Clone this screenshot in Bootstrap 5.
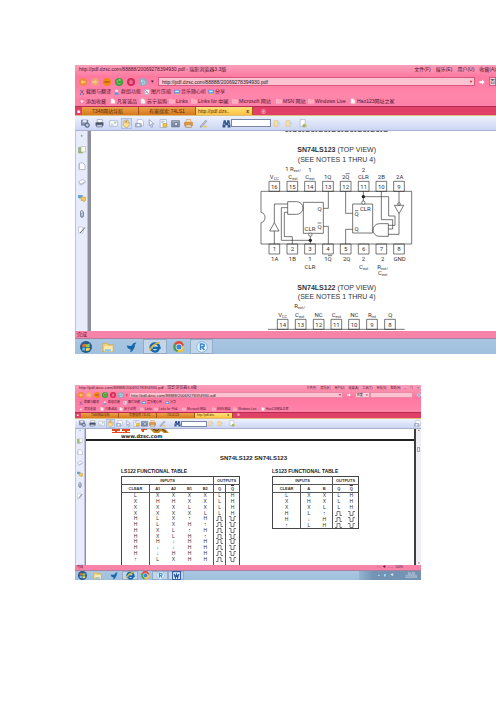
<!DOCTYPE html>
<html lang="zh-CN">
<head>
<meta charset="utf-8">
<meta name="viewport" content="width=device-width, initial-scale=1">
<title>SN74LS123 / SN74LS122</title>
<link href="https://cdn.jsdelivr.net/npm/bootstrap@5.3.0/dist/css/bootstrap.min.css" rel="stylesheet">
<style>
body{background:#fff;color:#222;font-family:"Liberation Sans","Noto Sans CJK SC",sans-serif;overflow-x:hidden}
.page-body{padding:65px 0 100px 75px}
a,button,input{color:inherit;font:inherit;text-decoration:none}
button{border:0;background:none;padding:0;line-height:1}
svg{display:block}
.shot{--t:5px;--ic:6px;--nav:8px;--tool:9px;--task:12px;font-size:var(--t);line-height:1;white-space:nowrap;overflow:hidden}
.shot-sm{--t:3px;--ic:4px;--nav:6px;--tool:7px;--task:9px;margin:31px 75px 0 0}
.ic{width:var(--ic);height:var(--ic);flex:none}
.nav-ic .ic{width:var(--nav);height:var(--nav)}
.tools .ic{width:var(--tool);height:var(--tool)}
.taskbar .ic{width:var(--task);height:var(--task)}
.side .ic{width:var(--nav);height:var(--nav)}
.chrome{background:linear-gradient(#f9a0ba,#ff78a0 12px,#ff86ac 30px,#fb7ba3);color:#54142e}
.title-row{height:11px;padding-left:4px;padding-bottom:2px}
.title-text{font-size:5px}
.menu{gap:5px;margin-left:auto;padding-right:0}
.addr-row{height:11px;padding-left:4px}
.nav-ic{width:79px;gap:4px}
.addr{background:#fbc3d2;border:1px solid #d9587f;border-radius:0;height:9px;padding:0 3px;color:#222;min-width:0;outline:0;font-size:5px}
.addr-wrap{position:relative}
.addr-arrow{position:absolute;right:2px;top:3px;color:#b81d3a;font-size:4px}
.engine{background:#fbd0db;border:1px solid #d9587f;color:#222;height:9px}
.search-box{width:43px}
.link-row,.mark-row{display:grid;align-items:center;padding-left:4px}
.link-row{height:9px;grid-template-columns:35px 30px 30px 34px 30px}
.mark-row{height:10px;grid-template-columns:31px 30px 29px 22px 41px 44px 32px 42px 60px}
.item{display:flex;align-items:center;gap:1px}
.tabs{height:10px;background:#e04068;border-top:1px solid #b62c50;border-bottom:1px solid #e0bd7e;align-items:stretch;color:#582b0d}
.tab-home{width:7px;color:#fff}
.tab-item{width:57px;background:linear-gradient(#eda04a,#d67a1c);border-right:1px solid #a9541c;text-align:left;padding-left:10px;display:flex;align-items:center}
.tab-live{background:linear-gradient(#ffe27c,#fbc142);padding-left:2px;padding-right:3px;justify-content:space-between}
.tools{height:15px;display:grid;align-items:center;justify-items:center;padding-left:2px;background:linear-gradient(#edf2ff,#ccd5f4);border-bottom:1px solid #a9b1cf;grid-template-columns:16px 13px 14px 13px 12px 12px 12px 12px 14px 16px 20px 40px 12px 12px 16px 1fr}
.find-ic{justify-self:end}
.find{width:100%;height:8px;border:1px solid #7b85a5;background:#fff;padding:0;border-radius:0}
.pressed{background:#cfdcfa;outline:1px solid #b1bde2}
.view{min-height:200px;background:#fff;display:flex;align-items:stretch}
.side{width:12px;background:#e7ebfc;border-left:1px solid #bcc3df;gap:8px;padding-top:2px}
.gutter{width:4px;background:#8e909c;border-left:1px solid #bcc0dd}
.circuit{width:170px;margin-left:159px;height:200px}
.circuit text{font-family:Roboto,"Liberation Sans",sans-serif;font-size:18px;fill:#333;text-anchor:middle}
.circuit .hd{font-family:"Liberation Sans",sans-serif;font-size:21px}
.circuit .sb{font-size:12px}
.wire{fill:none;stroke:#333;stroke-width:2}
.status{height:8px;background:#f783a9;color:#5b1531;padding:0 2px;border-bottom:1px solid #ad7d9d}
.taskbar{height:15px;display:grid;align-items:stretch;grid-template-columns:21px 24px 23px 24px 23px 23px 1fr;background:linear-gradient(#a9c6e2,#9fc0de)}
.taskbar button{display:flex;align-items:center;justify-content:center}
.running{background:#c3d5e9;box-shadow:inset 0 0 0 1px #92abc6}

.shot-sm .title-row{height:6px;padding-bottom:0}
.shot-sm .title-text,.shot-sm .addr{font-size:4px}
.shot-sm .menu{gap:4px;padding-right:2px}
.shot-sm .addr-row{height:8px;padding-left:3px}
.shot-sm .nav-ic{width:51px;gap:2px}
.shot-sm .addr,.shot-sm .engine{height:6px;border-color:#e98aa9;padding:0 1px}
.shot-sm .addr-arrow{top:1px}
.shot-sm .link-row{height:7px;grid-template-columns:24px 20px 19px 23px 20px}
.shot-sm .mark-row{height:6px;grid-template-columns:21px 19px 21px 14px 28px 30px 21px 28px 40px}
.shot-sm .tabs{height:7px}
.shot-sm .tab-home{width:6px}
.shot-sm .tab-item{width:38px}
.shot-sm .tools{height:10px;grid-template-columns:10px 10px 9px 9px 9px 8px 8px 8px 9px 11px 13px 26px 9px 9px 14px 1fr}
.shot-sm .find{height:6px}
.shot-sm .view{min-height:136px;height:136px}
.shot-sm .side{width:9px;gap:5px;padding-top:1px}
.shot-sm .gutter{width:2px}
.shot-sm .status{height:6px}
.shot-sm .taskbar{height:9px;grid-template-columns:14px 17px 16px 16px 14px 16px 16px 1fr}
.tray{background:linear-gradient(90deg,#93b3d2,#7393b4 15px);width:62px;color:#e6eef7;justify-self:end}
.sheet{border-right:2px solid #3c3e40;overflow:hidden}
.sheet-top{height:12px;border-bottom:2px solid #222;padding-left:25px}
.site{font:bold 5px/6px "DejaVu Sans","Liberation Sans",sans-serif;color:#222;padding-left:10px}
.sheet-title{font-size:6px;line-height:8px;font-weight:bold;margin-top:13px;padding-left:7px}
.tables{padding-left:35px;gap:32px;margin-top:7px}
.cap{font-size:5px;line-height:5px;font-weight:bold;margin-bottom:2px}
.truth{border-collapse:collapse;border:1px solid #444;table-layout:fixed;color:#333;font-size:5px;line-height:5px;text-align:center}
.truth th,.truth td{padding:0;overflow:hidden;vertical-align:middle}
.truth th{font-size:4px;font-weight:bold;height:8px;border-bottom:1px solid #555}
.truth .edge{border-right:1px solid #555}
.truth svg{margin:auto;width:7px;height:5px}
.truth-a{width:119px;height:93px}
.truth-b{width:86px;height:53px}
.w-clear{width:28px}.w-in{width:16px}.w-q{width:12px}.w-nq{width:14px}
.bar-q{text-decoration:overline}
.scroller{width:5px;background:#f0f0f2;color:#444;margin-left:auto}
.thumb-bar{width:3px;height:5px;border:1px solid #aaa;margin-top:15px}
</style>
<script src="https://cdn.jsdelivr.net/npm/bootstrap@5.3.0/dist/js/bootstrap.bundle.min.js"></script>
</head>
<body>
<svg width="0" height="0" class="position-absolute" aria-hidden="true">
<defs>
<symbol id="back" viewBox="0 0 16 16"><circle cx="8" cy="8" r="8" fill="#ef8a3a"/><path d="M8 3 3 8l5 5v-3h5V6H8z" fill="#ffc06a"/></symbol>
<symbol id="fwd" viewBox="0 0 16 16"><circle cx="8" cy="8" r="8" fill="#eea377"/><path d="m8 3 5 5-5 5v-3H3V6h5z" fill="#f7c58d"/></symbol>
<symbol id="stop" viewBox="0 0 16 16"><circle cx="8" cy="8" r="8" fill="#ef8a14"/><path d="M3 6h10v4H3z" fill="#c8650f"/></symbol>
<symbol id="reload" viewBox="0 0 16 16"><circle cx="8" cy="8" r="8" fill="#3f9a3c"/><path d="M12 9a4 4 0 1 1-2-5" stroke="#8fd470" stroke-width="2" fill="none"/><path d="m9 1 4 4-5 1z" fill="#8fd470"/></symbol>
<symbol id="home" viewBox="0 0 16 16"><circle cx="8" cy="8" r="8" fill="#d22a58"/><path d="m8 3 5 5h-2v4H5V8H3z" fill="#ee6f97"/></symbol>
<symbol id="undo" viewBox="0 0 16 16"><circle cx="8" cy="8" r="8" fill="#8fa9bb"/><path d="M5 12h4a3 3 0 0 0 0-6H4m3-3L4 6l3 3" stroke="#bfe0ea" stroke-width="2" fill="none"/></symbol>
<symbol id="scis" viewBox="0 0 16 16"><path d="m3 2 7 9m2-9L6 11" stroke="#4a5580" stroke-width="2"/><circle cx="4" cy="13" r="2" fill="#3c64b0"/><circle cx="12" cy="13" r="2" fill="#3c64b0"/></symbol>
<symbol id="group" viewBox="0 0 16 16"><circle cx="7" cy="5" r="4" fill="#f1e0ef"/><path d="M1 15q1-7 6-7t6 7z" fill="#609bd4"/></symbol>
<symbol id="pic" viewBox="0 0 16 16"><path d="M1 1h14v14H1z" fill="#f3f5ff" stroke="#806b91"/><path d="m3 3 9 10M3 12l5-5" stroke="#b24c7f" stroke-width="2"/></symbol>
<symbol id="tv" viewBox="0 0 16 16"><path d="M1 2h14v10H1z" fill="#408cd6"/><path d="M3 4h10v5H3z" fill="#bce8ff"/><path d="M3 13h10v2H3z" fill="#f2c94b"/></symbol>
<symbol id="star" viewBox="0 0 16 16"><path d="m8 1 2 5 6 .5-4.500 4L13 16l-5-3-5 3 1.500-5.500L0 6.500 6 6z" fill="#ffdce8" stroke="#e54a7d"/></symbol>
<symbol id="doc" viewBox="0 0 16 16"><path d="M2 1h8l4 4v10H2z" fill="#fff4f7" stroke="#e090aa"/><path d="M10 1v4h4" fill="none" stroke="#cc7893"/></symbol>
<symbol id="fold" viewBox="0 0 16 16"><path d="M1 3h5l2 2h7v9H1z" fill="#ffa9bf" stroke="#ffe1e8"/></symbol>
<symbol id="go" viewBox="0 0 16 16"><path d="M1 5h7V1l7 7-7 7v-4H1z" fill="#fff4f8"/></symbol>
<symbol id="save" viewBox="0 0 16 16"><path d="M1 2h11v9H1z" fill="#8a96b2" stroke="#475476"/><path d="M3 2h7v4H3z" fill="#e2e9f8"/><circle cx="11" cy="11" r="4" fill="#8392b0" stroke="#3c4868"/><path d="M9 11h4M11 9v4" stroke="#fff"/></symbol>
<symbol id="print" viewBox="0 0 16 16"><path d="M4 1h9v5H4z" fill="#fff" stroke="#7c839c"/><path d="M1 6h14v6H1z" fill="#4b5268"/><path d="M3 10h10v4H3z" fill="#cad3e9" stroke="#4b5268"/></symbol>
<symbol id="mail" viewBox="0 0 16 16"><path d="M1 3h14v10H1z" fill="#f9fbff" stroke="#8ba0c6"/><path d="M9 5h4v3H9z" fill="#a8cf93"/><path d="M3 9h5m-5 2h5" stroke="#98a5c8"/></symbol>
<symbol id="hand" viewBox="0 0 16 16"><path d="M3 9V4q1-2 2 0l1 3V2q1-2 2 0v5l1-5q2-1 2 1v5l2-2q2 0 1 2l-4 7H6L2 10z" fill="#ffdf8d" stroke="#c19743"/></symbol>
<symbol id="snap" viewBox="0 0 16 16"><path d="M4 1h8l3 3v8H4z" fill="#fff" stroke="#96a3be"/><path d="M1 8h10v6H1z" fill="#b3c2dc" stroke="#72839f"/><circle cx="6" cy="11" r="2" fill="#fff"/></symbol>
<symbol id="arrow" viewBox="0 0 16 16"><path d="m4 1 8 8H8l2 5-2 1-2-5-2 2z" fill="#fff" stroke="#63739a"/></symbol>
<symbol id="note" viewBox="0 0 16 16"><path d="M2 1h11v14H2z" fill="#fff" stroke="#8995ae"/><path d="M4 4h6M4 6h4" stroke="#6f84b2"/><path d="M7 8h7v6H7z" fill="#f0cb45" stroke="#ad9134"/></symbol>
<symbol id="cam" viewBox="0 0 16 16"><path d="M1 3h14v11H1z" fill="#8390a5" stroke="#535d72"/><path d="M2 5h12" stroke="#dbe2ee"/><circle cx="9" cy="9" r="3" fill="#d7e3f0" stroke="#485467"/></symbol>
<symbol id="stamp" viewBox="0 0 16 16"><path d="M4 1h8v6H4z" fill="#fbe3bd" stroke="#c78f4b"/><path d="M1 6h14v6H1z" fill="#eb9c39" stroke="#b4732b"/><path d="M3 10h10v5H3z" fill="#e6d3be" stroke="#9d7850"/></symbol>
<symbol id="pen" viewBox="0 0 16 16"><path d="m3 12 9-10 2 2-9 10-3 1z" fill="#bfc4ce" stroke="#7d879b"/><path d="M8 12h6v3H8z" fill="#e4c45c"/></symbol>
<symbol id="bino" viewBox="0 0 16 16"><path d="M3 2h4v4h2V2h4l2 9v4h-5v-4H6v4H1v-4z" fill="#33558e"/><path d="M3 9h2m6 0h2" stroke="#bad3f5" stroke-width="2"/></symbol>
<symbol id="step" viewBox="0 0 16 16"><path d="M2 3h7v10H2z" fill="#f7df9d" stroke="#d9bd77"/><path d="m9 4 5 4-5 4" fill="#c4d3f0"/></symbol>
<symbol id="mark1" viewBox="0 0 16 16"><path d="M2 1h9v12H2z" fill="#fff" stroke="#98a4bd"/><path d="m6 14 5-8 4 8z" fill="#eed063"/><circle cx="9" cy="12" r="3" fill="#91b581"/></symbol>
<symbol id="pages" viewBox="0 0 16 16"><path d="M1 3h8v11H1z" fill="#9bbf6b" stroke="#879a72"/><path d="M6 1h9v11H6z" fill="#f7f9eb" stroke="#9ba5b7"/></symbol>
<symbol id="sheet" viewBox="0 0 16 16"><path d="M3 2h7l4 4v9H3z" fill="#fff" stroke="#7b84a1"/><path d="M1 4v11" stroke="#aab3ca"/></symbol>
<symbol id="layer" viewBox="0 0 16 16"><path d="m1 7 9-4 5 4-9 5z" fill="#fff" stroke="#858da2"/><path d="m1 10 5 4 9-5" fill="none" stroke="#858da2"/></symbol>
<symbol id="talk" viewBox="0 0 16 16"><path d="M0 2h9v6H5l-2 3V8H0z" fill="#64a2dc"/><path d="M6 6h9v7h-2l-1 3-2-3H6z" fill="#f6c948" stroke="#c19735"/></symbol>
<symbol id="clip" viewBox="0 0 16 16"><path d="M11 4v7q0 4-3 4t-3-4V4q0-3 2.500-3T10 4v7q0 2-2 2t-2-2V5" fill="none" stroke="#63738f" stroke-width="1.500"/></symbol>
<symbol id="sign" viewBox="0 0 16 16"><path d="M1 2h9v12H1z" fill="#fff" stroke="#98a6b5"/><path d="M4 14 14 3" stroke="#59636d" stroke-width="2"/></symbol>
<symbol id="win" viewBox="0 0 16 16"><circle cx="8" cy="8" r="8" fill="#28598d"/><path d="M3 5q2-2 5-1v4q-3-1-5 0z" fill="#ee6939"/><path d="M8 4q3 1 5-1v5q-2 1-5 0z" fill="#90c84c"/><path d="M3 9q2-1 4 0v4q-3-1-4 0z" fill="#5eb9ef"/><path d="M8 9q3 1 5 0v3q-3 2-5 1z" fill="#f7d54d"/></symbol>
<symbol id="expl" viewBox="0 0 16 16"><path d="M1 3h6l1 2h7v9H1z" fill="#f2d37b" stroke="#cba84f"/><path d="M3 7h11v7H3z" fill="#f8ebb5"/><path d="M4 11h8v3H4z" fill="#8fc4e3"/></symbol>
<symbol id="bird" viewBox="0 0 16 16"><path d="M1 6q5 1 7 0 1-4 6-4-3 3-2 5l-2 4q-1 3-5 4 2-2 1-4-4 0-5-5z" fill="#1768a9"/></symbol>
<symbol id="ie" viewBox="0 0 16 16"><path d="M13 10q-2 5-6 4T2 8q1-5 6-5t6 6H5" fill="none" stroke="#1768aa" stroke-width="3"/><path d="M1 13Q3 5 14 2" fill="none" stroke="#e5b52e" stroke-width="2"/></symbol>
<symbol id="chrm" viewBox="0 0 16 16"><path d="M8 8 1 4q4-6 11-3l3 5z" fill="#df4b33"/><path d="M8 8 1 4q-3 8 5 11z" fill="#4f9e44"/><path d="m8 8-2 7q9 2 9-9z" fill="#f2c231"/><circle cx="8" cy="8" r="4" fill="#3d85d3" stroke="#eef5ff"/></symbol>
<symbol id="ring" viewBox="0 0 16 16"><circle cx="8" cy="8" r="7" fill="#e9f5ff" stroke="#6aaee0"/><path d="M6 12V4h2q3 0 3 2t-3 2l3 4" fill="none" stroke="#3a87cb" stroke-width="2"/></symbol>
<symbol id="word" viewBox="0 0 16 16"><path d="M1 1h14v14H1z" fill="#e8f0ff" stroke="#315fae" stroke-width="2"/><path d="m4 5 2 7 2-6 2 6 2-7" fill="none" stroke="#294f9a" stroke-width="2"/></symbol>
<symbol id="up" viewBox="0 0 7 5"><path d="M0 4.500h2v-4h3v4h2" fill="none" stroke="#444" stroke-width=".7"/></symbol>
<symbol id="dn" viewBox="0 0 7 5"><path d="M0 .5h2v4h3v-4h2" fill="none" stroke="#444" stroke-width=".7"/></symbol>
</defs>
</svg>

<main class="page-body">
<section class="shot" aria-label="SN74LS123">
  <header class="chrome">
    <div class="title-row d-flex align-items-center">
      <span class="title-text">http://pdf.dzsc.com/88888/20069278394930.pdf - 瑞影浏览器3.3版</span>
      <nav class="menu d-flex"><a href="#">文件(F)</a><a href="#">娱乐(E)</a><a href="#">用户(U)</a><a href="#">收藏(A)</a></nav>
    </div>
    <div class="addr-row d-flex align-items-center">
      <div class="nav-ic d-flex align-items-center flex-shrink-0">
        <button aria-label="后退"><svg class="ic"><use href="#back"/></svg></button><button aria-label="前进"><svg class="ic"><use href="#fwd"/></svg></button><button aria-label="停止"><svg class="ic"><use href="#stop"/></svg></button><button aria-label="刷新"><svg class="ic"><use href="#reload"/></svg></button><button aria-label="主页"><svg class="ic"><use href="#home"/></svg></button><button aria-label="撤销"><svg class="ic"><use href="#undo"/></svg></button><span>▾</span>
      </div>
      <div class="addr-wrap d-flex flex-grow-1"><input class="addr w-100" aria-label="地址" value="http://pdf.dzsc.com/88888/20069278394930.pdf"><span class="addr-arrow">▼</span></div>
      <button class="px-1" aria-label="转到"><svg class="ic"><use href="#go"/></svg></button>
      <button class="engine">百</button>
    </div>
    <nav class="link-row">
      <a class="item" href="#"><svg class="ic"><use href="#scis"/></svg>截图与翻译</a><a class="item" href="#"><svg class="ic"><use href="#group"/></svg>群组功能</a><a class="item" href="#"><svg class="ic"><use href="#pic"/></svg>图片压缩</a><a class="item" href="#"><svg class="ic"><use href="#tv"/></svg>音乐随心听</a><a class="item" href="#"><svg class="ic"><use href="#tv"/></svg>分享</a>
    </nav>
    <nav class="mark-row">
      <a class="item" href="#"><svg class="ic"><use href="#star"/></svg>添加收藏</a><a class="item" href="#"><svg class="ic"><use href="#doc"/></svg>凡客诚品</a><a class="item" href="#"><svg class="ic"><use href="#doc"/></svg>苏宁易购</a><a class="item" href="#"><svg class="ic"><use href="#fold"/></svg>Links</a><a class="item" href="#"><svg class="ic"><use href="#fold"/></svg>Links for 中國</a><a class="item" href="#"><svg class="ic"><use href="#fold"/></svg>Microsoft 网站</a><a class="item" href="#"><svg class="ic"><use href="#fold"/></svg>MSN 网站</a><a class="item" href="#"><svg class="ic"><use href="#fold"/></svg>Windows Live</a><a class="item" href="#"><svg class="ic"><use href="#doc"/></svg>Hao123网址之家</a>
    </nav>
    <div class="tabs d-flex">
      <button class="tab-home" aria-label="标签">■</button>
      <button class="tab-item">7348网站导航</button><button class="tab-item">有害搜索 74LS1</button><button class="tab-item tab-live"><span>http://pdf.dzs..</span><b>x</b></button><button class="px-2 text-white" aria-label="新标签">⊕</button>
    </div>
  </header>
  <div class="tools">
    <svg class="ic"><use href="#save"/></svg><svg class="ic"><use href="#print"/></svg><svg class="ic"><use href="#mail"/></svg><svg class="ic pressed"><use href="#hand"/></svg><svg class="ic"><use href="#snap"/></svg><svg class="ic"><use href="#arrow"/></svg><svg class="ic"><use href="#note"/></svg><svg class="ic"><use href="#cam"/></svg><svg class="ic"><use href="#stamp"/></svg><svg class="ic"><use href="#pen"/></svg><svg class="ic find-ic"><use href="#bino"/></svg><input class="find" aria-label="查找"><svg class="ic"><use href="#step"/></svg><svg class="ic"><use href="#step"/></svg><svg class="ic"><use href="#mark1"/></svg>
  </div>
  <div class="view">
    <div class="side d-flex flex-column align-items-center"><span>›</span><svg class="ic"><use href="#pages"/></svg><svg class="ic"><use href="#sheet"/></svg><svg class="ic"><use href="#layer"/></svg><svg class="ic"><use href="#talk"/></svg><svg class="ic"><use href="#clip"/></svg><svg class="ic"><use href="#sign"/></svg></div>
    <div class="gutter"></div>
    <svg class="circuit" viewBox="0 3 510 600" role="img" aria-label="SN74LS123 SN74LS122">
      <path d="M106 4h310" stroke="#444" stroke-width="3" stroke-dasharray="9 3 6 4 12 5"/>
      <text class="hd" x="260" y="66"><tspan font-weight="bold">SN74LS123</tspan> (TOP VIEW)</text>
      <text class="hd" x="260" y="95">(SEE NOTES 1 THRU 4)</text>
      <g class="wire">
        <path d="M33 184H485V342H33V278A16 16 0 0 0 33 247Z"/>
        <path d="M57 154h32v30H57zM111 154h32v30h-32zM164 154h32v30h-32zM218 154h32v30h-32zM271 154h32v30h-32zM325 154h32v30h-32zM378 154h32v30h-32zM431 154h32v30h-32z"/>
        <path d="M57 342h32v30H57zM111 342h32v30h-32zM164 342h32v30h-32zM218 342h32v30h-32zM271 342h32v30h-32zM325 342h32v30h-32zM378 342h32v30h-32zM431 342h32v30h-32z"/>
        <path d="M160 217h60v93h-60zM308 222h60v87h-60z"/>
        <path d="M113 215h27a19 19 0 0 1 0 38h-27zM415 281h-27a19 19 0 0 0 0 38h27z"/>
        <path d="M59 303h28l-14-25zM433 226h28l-14 25z"/>
        <path d="M73 342v-39M73 278v-56h40M127 342v-22h-24v-73h10M181 342v-23M181 331H94v-98h19M220 235h15v-51M220 289h15v53"/>
        <path d="M287 184v66h21M287 342v-44h21M340 184v30M340 200h76v58h19v28h-20M394 184v85h34v28h-13M447 184v37M447 251v62h-32"/>
        <circle cx="181" cy="314" r="5" fill="#fff"/><circle cx="340" cy="218" r="5" fill="#fff"/><circle cx="447" cy="222" r="4" fill="#fff"/>
      </g>
      <circle cx="181" cy="331" r="5" fill="#222"/><circle cx="340" cy="200" r="5" fill="#222"/>
      <text x="73" y="176">16</text><text x="127" y="176">15</text><text x="180" y="176">14</text><text x="234" y="176">13</text><text x="287" y="176">12</text><text x="341" y="176">11</text><text x="394" y="176">10</text><text x="447" y="176">9</text>
      <text x="73" y="364">1</text><text x="127" y="364">2</text><text x="180" y="364">3</text><text x="234" y="364">4</text><text x="287" y="364">5</text><text x="341" y="364">6</text><text x="394" y="364">7</text><text x="447" y="364">8</text>
      <text x="73" y="147">V<tspan class="sb" dy="3">CC</tspan></text><text x="129" y="123">1 R<tspan class="sb" dy="2">ext/</tspan></text><text x="129" y="146">C<tspan class="sb" dy="3">ext</tspan></text><text x="180" y="125">1</text><text x="180" y="146">C<tspan class="sb" dy="3">ext</tspan></text><text x="233" y="147">1Q</text><text x="287" y="147">2Q</text><text x="340" y="125">2</text><text x="340" y="147">CLR</text><text x="394" y="147">2B</text><text x="449" y="147">2A</text>
      <text x="209" y="243">Q</text><text x="209" y="296">Q</text><text x="180" y="304">CLR</text><text x="346" y="244">CLR</text><text x="320" y="258">Q</text><text x="320" y="304">Q</text>
      <path class="wire" d="M287 131h12M203 279h11M315 242h10M234 377h12"/>
      <text x="74" y="392">1A</text><text x="127" y="392">1B</text><text x="180" y="392">1</text><text x="180" y="416">CLR</text><text x="234" y="393">1Q</text><text x="290" y="392">2Q</text><text x="340" y="392">2</text><text x="341" y="416">C<tspan class="sb" dy="3">ext</tspan></text><text x="398" y="392">2</text><text x="398" y="416">R<tspan class="sb" dy="3">ext/</tspan></text><text x="398" y="436">C<tspan class="sb" dy="3">ext</tspan></text><text x="449" y="392">GND</text>
      <text class="hd" x="260" y="479"><tspan font-weight="bold">SN74LS122</tspan> (TOP VIEW)</text>
      <text class="hd" x="260" y="508">(SEE NOTES 1 THRU 4)</text>
      <text x="149" y="535">R<tspan class="sb" dy="3">ext/</tspan></text>
      <text x="98" y="560">V<tspan class="sb" dy="3">CC</tspan></text><text x="149" y="560">C<tspan class="sb" dy="3">ext</tspan></text><text x="206" y="560">NC</text><text x="259" y="560">C<tspan class="sb" dy="3">ext</tspan></text><text x="313" y="560">NC</text><text x="366" y="560">R<tspan class="sb" dy="3">int</tspan></text><text x="421" y="560">Q</text>
      <path class="wire" d="M54 598H464M82 568h32v30H82zM136 568h32v30h-32zM190 568h32v30h-32zM243 568h32v30h-32zM296 568h32v30h-32zM350 568h32v30h-32zM404 568h32v30h-32z"/>
      <text x="98" y="590">14</text><text x="152" y="590">13</text><text x="206" y="590">12</text><text x="259" y="590">11</text><text x="312" y="590">10</text><text x="366" y="590">9</text><text x="420" y="590">8</text>
    </svg>
  </div>
  <div class="status d-flex align-items-center">完成</div>
  <footer class="taskbar">
    <button aria-label="开始"><svg class="ic"><use href="#win"/></svg></button><button aria-label="文件夹"><svg class="ic"><use href="#expl"/></svg></button><button aria-label="迅雷"><svg class="ic"><use href="#bird"/></svg></button><button class="running" aria-label="IE"><svg class="ic"><use href="#ie"/></svg></button><button aria-label="Chrome"><svg class="ic"><use href="#chrm"/></svg></button><button class="running" aria-label="浏览器"><svg class="ic"><use href="#ring"/></svg></button>
  </footer>
</section>

<section class="shot shot-sm" aria-label="SN74LS122 SN74LS123">
  <header class="chrome">
    <div class="title-row d-flex align-items-center">
      <span class="title-text">http://pdf.dzsc.com/88888/20069278394930.pdf - 瑞影浏览器3.3版</span>
      <nav class="menu d-flex"><a href="#">文件(F)</a><a href="#">娱乐(E)</a><a href="#">用户(U)</a><a href="#">收藏(A)</a><a href="#">工具(T)</a><a href="#">另存(S)</a><a href="#">帮助(H)</a><button aria-label="最小化">–</button><button aria-label="还原">❐</button><button aria-label="关闭">×</button></nav>
    </div>
    <div class="addr-row d-flex align-items-center">
      <div class="nav-ic d-flex align-items-center flex-shrink-0">
        <button aria-label="后退"><svg class="ic"><use href="#back"/></svg></button><button aria-label="前进"><svg class="ic"><use href="#fwd"/></svg></button><button aria-label="停止"><svg class="ic"><use href="#stop"/></svg></button><button aria-label="刷新"><svg class="ic"><use href="#reload"/></svg></button><button aria-label="主页"><svg class="ic"><use href="#home"/></svg></button><button aria-label="撤销"><svg class="ic"><use href="#undo"/></svg></button><span>▾</span>
      </div>
      <div class="addr-wrap d-flex flex-grow-1"><input class="addr w-100" aria-label="地址" value="http://pdf.dzsc.com/88888/20069278394930.pdf"><span class="addr-arrow">▾</span></div>
      <button class="px-1" aria-label="转到"><svg class="ic"><use href="#go"/></svg></button>
      <button class="engine flex-shrink-0">百度 &nbsp; &nbsp;▾</button>
      <input class="addr search-box" aria-label="搜索">
      <button class="ps-1" aria-label="搜索按钮"><svg class="ic"><use href="#ring"/></svg></button>
    </div>
    <nav class="link-row">
      <a class="item" href="#"><svg class="ic"><use href="#scis"/></svg>截图与翻译</a><a class="item" href="#"><svg class="ic"><use href="#group"/></svg>群组功能</a><a class="item" href="#"><svg class="ic"><use href="#pic"/></svg>图片压缩</a><a class="item" href="#"><svg class="ic"><use href="#tv"/></svg>音乐随心听</a><a class="item" href="#"><svg class="ic"><use href="#tv"/></svg>分享</a>
    </nav>
    <nav class="mark-row">
      <a class="item" href="#"><svg class="ic"><use href="#star"/></svg>添加收藏</a><a class="item" href="#"><svg class="ic"><use href="#doc"/></svg>凡客诚品</a><a class="item" href="#"><svg class="ic"><use href="#doc"/></svg>苏宁易购</a><a class="item" href="#"><svg class="ic"><use href="#fold"/></svg>Links</a><a class="item" href="#"><svg class="ic"><use href="#fold"/></svg>Links for 中國</a><a class="item" href="#"><svg class="ic"><use href="#fold"/></svg>Microsoft 网站</a><a class="item" href="#"><svg class="ic"><use href="#fold"/></svg>MSN 网站</a><a class="item" href="#"><svg class="ic"><use href="#fold"/></svg>Windows Live</a><a class="item" href="#"><svg class="ic"><use href="#doc"/></svg>Hao123网址之家</a>
    </nav>
    <div class="tabs d-flex">
      <button class="tab-home" aria-label="标签">■</button>
      <button class="tab-item">7348网站导航</button><button class="tab-item">有害搜索 74LS1</button><button class="tab-item">74LS123</button><button class="tab-item tab-live"><span>http://pdf.dzs</span><b>x</b></button><button class="px-1 text-white" aria-label="新标签">⊕</button>
    </div>
  </header>
  <div class="tools">
    <svg class="ic"><use href="#save"/></svg><svg class="ic"><use href="#print"/></svg><svg class="ic"><use href="#mail"/></svg><svg class="ic pressed"><use href="#hand"/></svg><svg class="ic"><use href="#snap"/></svg><svg class="ic"><use href="#arrow"/></svg><svg class="ic"><use href="#note"/></svg><svg class="ic"><use href="#cam"/></svg><svg class="ic"><use href="#stamp"/></svg><svg class="ic"><use href="#pen"/></svg><svg class="ic find-ic"><use href="#bino"/></svg><input class="find" aria-label="查找"><svg class="ic"><use href="#step"/></svg><svg class="ic"><use href="#step"/></svg><svg class="ic"><use href="#mark1"/></svg><svg class="ic find-ic"><use href="#snap"/></svg>
  </div>
  <div class="view">
    <div class="side d-flex flex-column align-items-center flex-shrink-0"><span>›</span><svg class="ic"><use href="#pages"/></svg><svg class="ic"><use href="#sheet"/></svg><svg class="ic"><use href="#layer"/></svg><svg class="ic"><use href="#talk"/></svg><svg class="ic"><use href="#clip"/></svg><svg class="ic"><use href="#sign"/></svg></div>
    <div class="gutter flex-shrink-0"></div>
    <article class="sheet flex-grow-1">
      <div class="sheet-top">
        <svg width="62" height="4" viewBox="0 0 62 4"><path d="M1 0h8v2H1zM1 3h18v1H1zM4 0h2v4H4zM11 0h8v2h-8zM14 0h2v4h-2zM30 0h6v1h-3v2h-2z" fill="#e24a20"/><path d="m39 0 4 4h5l2-2 3 2h5l-4-4z" fill="#bc8724"/><path d="m42 0 4 2 2-2m3 0 4 3" fill="none" stroke="#5c3a12"/></svg>
        <div class="site">www.dzsc.com</div>
      </div>
      <h1 class="sheet-title text-center mb-0">SN74LS122 SN74LS123</h1>
      <div class="tables d-flex align-items-start">
        <div><h2 class="cap">LS122 FUNCTIONAL TABLE</h2>
        <table class="truth truth-a">
          <colgroup><col class="w-clear"><col class="w-in"><col class="w-in"><col class="w-in"><col class="w-in"><col class="w-q"><col class="w-nq"></colgroup>
          <thead><tr><th colspan="5" class="edge">INPUTS</th><th colspan="2">OUTPUTS</th></tr><tr><th class="edge">CLEAR</th><th>A1</th><th>A2</th><th>B1</th><th class="edge">B2</th><th class="edge">Q</th><th><span class="bar-q">Q</span></th></tr></thead>
          <tbody>
          <tr><td class="edge">L<td>X<td>X<td>X<td class="edge">X<td class="edge">L<td>H</tr>
          <tr><td class="edge">X<td>H<td>H<td>X<td class="edge">X<td class="edge">L<td>H</tr>
          <tr><td class="edge">X<td>X<td>X<td>L<td class="edge">X<td class="edge">L<td>H</tr>
          <tr><td class="edge">X<td>X<td>X<td>X<td class="edge">L<td class="edge">L<td>H</tr>
          <tr><td class="edge">H<td>L<td>X<td>↑<td class="edge">H<td class="edge"><svg><use href="#up"/></svg><td><svg><use href="#dn"/></svg></tr>
          <tr><td class="edge">H<td>L<td>X<td>H<td class="edge">↑<td class="edge"><svg><use href="#up"/></svg><td><svg><use href="#dn"/></svg></tr>
          <tr><td class="edge">H<td>X<td>L<td>↑<td class="edge">H<td class="edge"><svg><use href="#up"/></svg><td><svg><use href="#dn"/></svg></tr>
          <tr><td class="edge">H<td>X<td>L<td>H<td class="edge">↑<td class="edge"><svg><use href="#up"/></svg><td><svg><use href="#dn"/></svg></tr>
          <tr><td class="edge">H<td>H<td>↓<td>H<td class="edge">H<td class="edge"><svg><use href="#up"/></svg><td><svg><use href="#dn"/></svg></tr>
          <tr><td class="edge">H<td>↓<td>↓<td>H<td class="edge">H<td class="edge"><svg><use href="#up"/></svg><td><svg><use href="#dn"/></svg></tr>
          <tr><td class="edge">H<td>↓<td>H<td>H<td class="edge">H<td class="edge"><svg><use href="#up"/></svg><td><svg><use href="#dn"/></svg></tr>
          <tr><td class="edge">↑<td>L<td>X<td>H<td class="edge">H<td class="edge"><svg><use href="#up"/></svg><td><svg><use href="#dn"/></svg></tr>
          <tr><td class="edge">&nbsp;<td><td><td><td class="edge"><td class="edge"><td></tr>
          </tbody>
        </table></div>
        <div><h2 class="cap">LS123 FUNCTIONAL TABLE</h2>
        <table class="truth truth-b">
          <colgroup><col class="w-clear"><col class="w-in"><col class="w-in"><col class="w-q"><col class="w-nq"></colgroup>
          <thead><tr><th colspan="3" class="edge">INPUTS</th><th colspan="2">OUTPUTS</th></tr><tr><th class="edge">CLEAR</th><th>A</th><th class="edge">B</th><th>Q</th><th><span class="bar-q">Q</span></th></tr></thead>
          <tbody>
          <tr><td class="edge">L<td>X<td class="edge">X<td>L<td>H</tr>
          <tr><td class="edge">X<td>H<td class="edge">X<td>L<td>H</tr>
          <tr><td class="edge">X<td>X<td class="edge">L<td>L<td>H</tr>
          <tr><td class="edge">H<td>L<td class="edge">↑<td><svg><use href="#up"/></svg><td><svg><use href="#dn"/></svg></tr>
          <tr><td class="edge">H<td>↓<td class="edge">H<td><svg><use href="#up"/></svg><td><svg><use href="#dn"/></svg></tr>
          <tr><td class="edge">↑<td>L<td class="edge">H<td><svg><use href="#up"/></svg><td><svg><use href="#dn"/></svg></tr>
          </tbody>
        </table></div>
      </div>
    </article>
    <div class="scroller d-flex flex-column align-items-center flex-shrink-0"><span>▴</span><span class="thumb-bar"></span><span class="mt-auto">▾</span></div>
  </div>
  <div class="status d-flex align-items-center justify-content-between"><span>完成</span><span class="pe-3">◯ &nbsp; ◀ &nbsp; ▫ ▫ ▫ &nbsp; 100%</span></div>
  <footer class="taskbar">
    <button aria-label="开始"><svg class="ic"><use href="#win"/></svg></button><button aria-label="文件夹"><svg class="ic"><use href="#expl"/></svg></button><button aria-label="迅雷"><svg class="ic"><use href="#bird"/></svg></button><button class="running" aria-label="IE"><svg class="ic"><use href="#ie"/></svg></button><button aria-label="Chrome"><svg class="ic"><use href="#chrm"/></svg></button><button class="running" aria-label="浏览器"><svg class="ic"><use href="#ring"/></svg></button><button class="running" aria-label="Word"><svg class="ic"><use href="#word"/></svg></button>
    <div class="tray d-flex align-items-center justify-content-end gap-1 pe-1"><span>▴</span><span>▮</span><span>◀</span><span class="text-center ps-2">10:20<br>2013/5/9</span></div>
  </footer>
</section>
</main>
</body>
</html>
